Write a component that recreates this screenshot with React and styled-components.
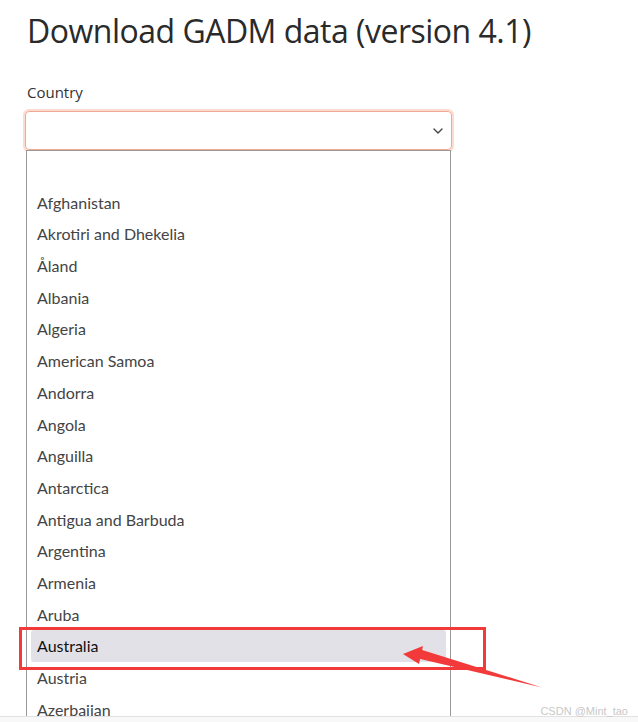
import React from 'react'
import styled, { createGlobalStyle } from 'styled-components'

const Global = createGlobalStyle`
  html, body {
    margin: 0;
    padding: 0;
    background: #fff;
    overflow: hidden;
    height: 722px;
  }
`

const Page = styled.div`
  position: relative;
  height: 722px;
  padding: 12px 0 0 27px;
  box-sizing: border-box;
  font-family: 'Open Sans', 'Noto Sans', sans-serif;
  color: #333;
`

const Title = styled.h1`
  margin: 0;
  font-size: 32px;
  font-weight: 400;
  line-height: 38px;
  letter-spacing: -0.5px;
  color: #2a2a2a;
`

const Label = styled.div`
  margin-top: 32px;
  font-size: 15px;
  line-height: 20px;
  color: #333;
`

const Field = styled.div`
  margin-top: 9px;
  margin-left: -2px;
  width: 427px;
`

const Select = styled.div`
  height: 39px;
  border: 1px solid #f2a894;
  border-radius: 4px;
  box-shadow: 0 0 0 2px rgba(250, 190, 170, 0.55);
  display: flex;
  align-items: center;
  justify-content: flex-end;
  padding-right: 8px;
  box-sizing: border-box;
  color: #444;
`

const List = styled.ul`
  list-style: none;
  margin: 0 0 0 1px;
  padding: 4px 4px 0;
  width: 425px;
  box-sizing: border-box;
  border: 1px solid #9a9a9a;
  border-bottom: none;
  background: #fff;
  font-family: 'Lato', 'Noto Sans', sans-serif;
  font-size: 16px;
  color: #444;
`

const Item = styled.li`
  height: 31.7px;
  line-height: 31.7px;
  padding-left: 6px;
  border-radius: 3px;
  background: ${p => (p.$active ? '#e1e1e7' : 'transparent')};
  color: ${p => (p.$active ? '#111' : '#444')};
`

const Highlight = styled.div`
  position: absolute;
  left: 19px;
  top: 627px;
  width: 467px;
  height: 43px;
  border: 3px solid #f23a3a;
  box-sizing: border-box;
`

const Arrow = styled.svg`
  position: absolute;
  left: 0;
  top: 0;
  pointer-events: none;
`

const Watermark = styled.div`
  position: absolute;
  right: 10px;
  bottom: 5px;
  font-family: 'Liberation Sans', sans-serif;
  font-size: 11px;
  color: #c8c8c8;
`

const BottomEdge = styled.div`
  position: absolute;
  left: 0;
  right: 0;
  bottom: 0;
  height: 5px;
  border-top: 1px solid #e2e2e2;
  background: #f8f8f8;
`

const countries = [
  '',
  'Afghanistan',
  'Akrotiri and Dhekelia',
  'Åland',
  'Albania',
  'Algeria',
  'American Samoa',
  'Andorra',
  'Angola',
  'Anguilla',
  'Antarctica',
  'Antigua and Barbuda',
  'Argentina',
  'Armenia',
  'Aruba',
  'Australia',
  'Austria',
  'Azerbaijan',
]

const Chevron = () => (
  <svg width="10" height="6" viewBox="0 0 10 6" fill="none">
    <path d="M1 1l4 4 4-4" stroke="#444" strokeWidth="1.4" strokeLinecap="round" strokeLinejoin="round" />
  </svg>
)

export default function App() {
  return (
    <>
      <Global />
      <Page>
        <Title>Download GADM data (version 4.1)</Title>
        <Label>Country</Label>
        <Field>
          <Select>
            <Chevron />
          </Select>
          <List>
            {countries.map((c, i) => (
              <Item key={i} $active={c === 'Australia'}>{c}</Item>
            ))}
          </List>
        </Field>
        <BottomEdge />
        <Highlight />
        <Arrow width="638" height="722" viewBox="0 0 638 722">
          {/* shaft tapers from the tail toward the head */}
          <polygon points="542,687.5 419,649 416,658" fill="#f23a3a" />
          <polygon points="403,654 423,646 419,664" fill="#f23a3a" />
        </Arrow>
        <Watermark>CSDN @Mint_tao</Watermark>
      </Page>
    </>
  )
}
